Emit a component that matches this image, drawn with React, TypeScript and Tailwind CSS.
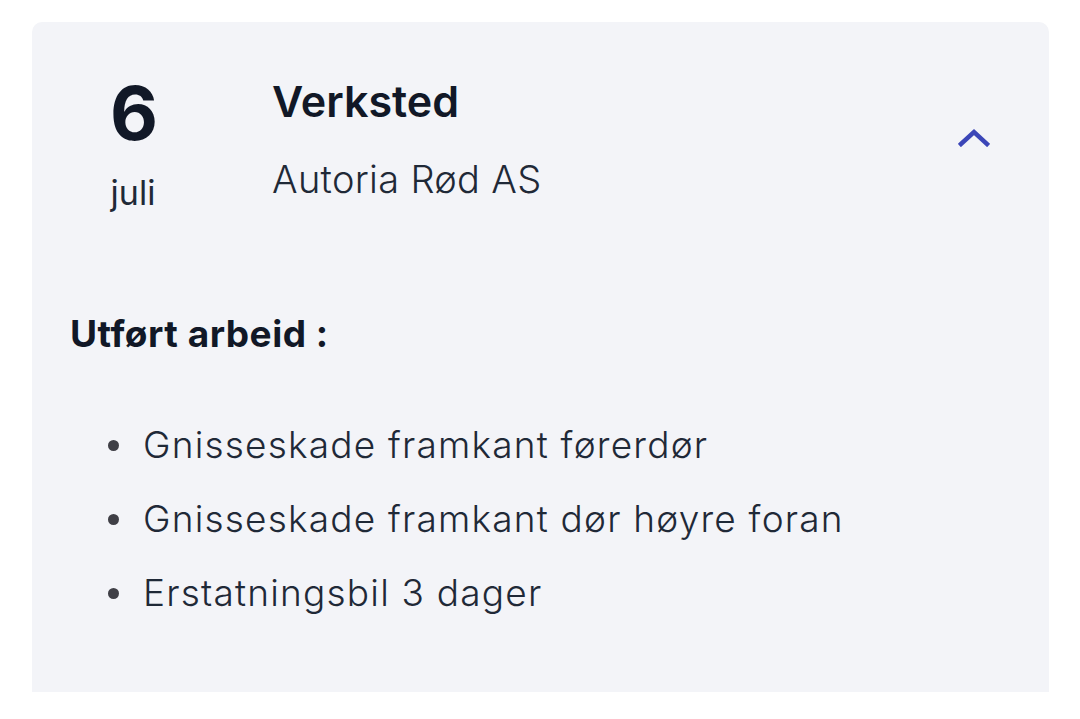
import React from 'react';

const items: string[] = [
  'Gnisseskade framkant førerdør',
  'Gnisseskade framkant dør høyre foran',
  'Erstatningsbil 3 dager',
];

const font = { fontFamily: 'Inter, "Noto Sans", sans-serif' };

const App: React.FC = () => {
  return (
    <div className="min-h-screen bg-white pt-[22px] pl-[32px] pr-[31px]" style={font}>
      <div className="h-[670px] rounded-t-[10px] bg-[#f3f4f8] pl-[38px] pr-[59px] text-[#111827]">
        <div className="flex items-start pt-[51px]">
          <div className="flex w-[126px] flex-col items-center">
            <span className="text-[74px] font-bold leading-[80px] tracking-tight">6</span>
            <span className="mt-[20px] text-[34px] font-normal leading-[40px] text-[#1f2937]">juli</span>
          </div>
          <div className="ml-[76px] flex flex-1 flex-col">
            <span className="mt-[4px] text-[43px] font-semibold leading-[48px]">Verksted</span>
            <span className="mt-[32px] text-[38px] font-light leading-[44px] tracking-[0.3px] text-[#1f2937]">Autoria Rød AS</span>
          </div>
          <button className="mt-[49px] flex h-[30px] w-[32px] items-center justify-center text-[#3b46b8]">
            <svg width="32" height="20" viewBox="0 0 32 20" fill="none">
              <path d="M3 17 L16 5 L29 17" stroke="currentColor" strokeWidth="4.5" strokeLinecap="square" />
            </svg>
          </button>
        </div>

        <div className="pt-[99px]">
          <h3 className="text-[37px] font-bold leading-[44px] tracking-[0.5px]">Utført arbeid :</h3>
          <ul className="mt-[67px] flex flex-col gap-[30px] pl-[38px]">
            {items.map((item) => (
              <li
                key={item}
                className="flex items-center text-[37px] font-light leading-[44px] tracking-[1.2px] text-[#1f2937]"
              >
                <span className="mr-[24px] h-[11px] w-[11px] shrink-0 rounded-full bg-[#3f3f46]" />
                {item}
              </li>
            ))}
          </ul>
        </div>
      </div>
    </div>
  );
};

export default App;
